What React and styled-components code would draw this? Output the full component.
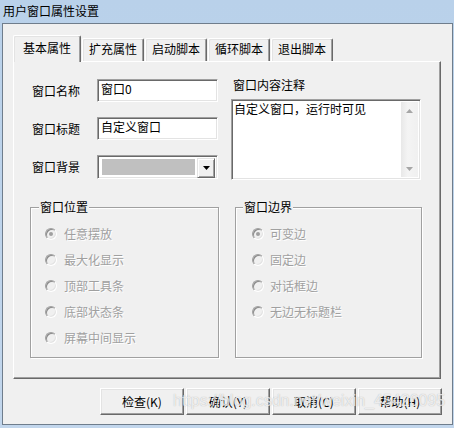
import React from "react";
import styled, { createGlobalStyle } from "styled-components";

const GlobalStyle = createGlobalStyle`
  html, body { margin: 0; padding: 0; background: #b9d1ea; }
  body {
    font-family: "Noto Sans CJK SC", "Liberation Sans", sans-serif;
    font-size: 12px;
    color: #000;
  }
  * { box-sizing: border-box; }
`;

const Window = styled.div`
  position: relative;
  width: 454px;
  height: 428px;
  display: flex;
  flex-direction: column;
  background: linear-gradient(#b9d1ea, #c2d6ec);
  overflow: hidden;
`;

const TitleBar = styled.div`
  height: 22px;
  padding-left: 3px;
  display: flex;
  align-items: center;
  font-size: 12px;
  line-height: 14px;
  color: #000;
`;

const Body = styled.div`
  flex: 1;
  margin: 1px 1px 3px 2px;
  border: 1px solid #6f7d8c;
  background: #f0f0f0;
  padding: 11px 10px 0 10px;
  display: flex;
  flex-direction: column;
`;

const TabRow = styled.div`
  display: flex;
  align-items: flex-end;
  gap: 1px;
  height: 26px;
`;

const Tab = styled.div`
  position: relative;
  z-index: ${(p) => (p.$active ? 1 : 0)};
  width: ${(p) => (p.$active ? 68 : 62)}px;
  height: ${(p) => (p.$active ? 27 : 23)}px;
  margin-bottom: ${(p) => (p.$active ? -1 : 0)}px;
  padding-top: ${(p) => (p.$active ? 5 : 3)}px;
  display: flex;
  justify-content: center;
  align-items: flex-start;
  background: #f0f0f0;
  border-top: 1px solid #ffffff;
  border-left: 1px solid #ffffff;
  border-right: 1px solid #696969;
  box-shadow: inset -1px 0 0 #a0a0a0, inset 1px 1px 0 #e3e3e3;
  border-radius: 2px 2px 0 0;
  line-height: 14px;
  white-space: nowrap;
`;

const Panel = styled.div`
  width: 428px;
  height: 318px;
  border-top: 1px solid #ffffff;
  border-left: 1px solid #ffffff;
  border-right: 1px solid #696969;
  border-bottom: 1px solid #696969;
  box-shadow: inset -1px -1px 0 #a0a0a0;
  padding: 16px 0 0 16px;
  display: flex;
  flex-direction: column;
`;

const TopArea = styled.div`
  display: flex;
  gap: 13px;
  padding-left: 2px;
`;

const FieldList = styled.div`
  display: flex;
  flex-direction: column;
  gap: 15px;
  padding-top: 1px;
  width: 186px;
`;

const Field = styled.div`
  display: flex;
  align-items: center;
  height: ${(p) => p.$h || 23}px;
`;

const Label = styled.span`
  width: 65px;
  line-height: 14px;
  white-space: nowrap;
`;

const sunken = `
  border: 1px solid;
  border-color: #a0a0a0 #ffffff #ffffff #a0a0a0;
  box-shadow: inset 1px 1px 0 #696969, inset -1px -1px 0 #e3e3e3;
`;

const TextBox = styled.div`
  width: 121px;
  height: 23px;
  ${sunken}
  background: #fff;
  padding: 2px 2px 0 3px;
  line-height: 14px;
  white-space: nowrap;
`;

const Combo = styled.div`
  width: 121px;
  height: 24px;
  ${sunken}
  background: #fff;
  padding: 2px;
  display: flex;
`;

const Swatch = styled.div`
  flex: 1;
  margin: 1px 2px 1px 2px;
  background: #c0c0c0;
`;

const DropButton = styled.div`
  width: 18px;
  height: 20px;
  display: flex;
  align-items: center;
  justify-content: center;
  background: #f0f0f0;
  border: 1px solid;
  border-color: #e3e3e3 #696969 #696969 #e3e3e3;
  box-shadow: inset 1px 1px 0 #ffffff, inset -1px -1px 0 #a0a0a0;
`;

const NoteColumn = styled.div`
  display: flex;
  flex-direction: column;
`;

const NoteLabel = styled.div`
  line-height: 14px;
  padding-left: 2px;
  margin-bottom: 7px;
  white-space: nowrap;
`;

const NoteBox = styled.div`
  width: 190px;
  height: 81px;
  ${sunken}
  background: #fff;
  padding: 2px;
  display: flex;
`;

const NoteText = styled.div`
  flex: 1;
  line-height: 14px;
  white-space: nowrap;
`;

const ScrollBar = styled.div`
  width: 17px;
  display: flex;
  flex-direction: column;
  justify-content: space-between;
  background: linear-gradient(90deg, #e8e8e8, #f4f4f4 40%, #f0f0f0);
`;

const ScrollArrow = styled.div`
  height: 17px;
  display: flex;
  align-items: center;
  justify-content: center;
`;

const GroupRow = styled.div`
  display: flex;
  gap: 16px;
  margin-top: 20px;
`;

const Group = styled.fieldset`
  margin: 0;
  padding: 0;
  width: ${(p) => p.$w}px;
  height: 158px;
  border: 1px solid #a0a0a0;
  box-shadow: inset 1px 1px 0 #ffffff, 1px 1px 0 #ffffff;
  min-width: 0;
`;

const Legend = styled.legend`
  margin-left: ${(p) => p.$offset}px;
  padding: 0 1px;
  line-height: 14px;
  font-size: 12px;
  color: #000;
  background: #f0f0f0;
`;

const RadioList = styled.div`
  margin-top: 7px;
  padding-left: ${(p) => p.$indent}px;
  display: flex;
  flex-direction: column;
`;

const RadioRow = styled.div`
  height: 26px;
  display: flex;
  align-items: center;
  gap: ${(p) => p.$gap}px;
`;

const RadioCircle = styled.span`
  position: relative;
  width: 12px;
  height: 12px;
  border-radius: 50%;
  border: 1px solid;
  border-color: #a0a0a0 #ffffff #ffffff #a0a0a0;
  box-shadow: inset 1px 1px 0 #8a8a8a, inset -1px -1px 0 #e3e3e3;
  background: #f0f0f0;
  flex: none;

  &::after {
    content: "";
    display: ${(p) => (p.$checked ? "block" : "none")};
    position: absolute;
    left: 3px;
    top: 3px;
    width: 4px;
    height: 4px;
    border-radius: 50%;
    background: #a0a0a0;
  }
`;

const DisabledText = styled.span`
  color: #a0a0a0;
  text-shadow: 1px 1px 0 #ffffff;
  line-height: 14px;
  white-space: nowrap;
`;

const ButtonRow = styled.div`
  display: flex;
  justify-content: flex-end;
  gap: 2px;
  margin-top: 9px;
`;

const Button = styled.div`
  width: 84px;
  height: 27px;
  display: flex;
  align-items: center;
  justify-content: center;
  background: #f0f0f0;
  border: 1px solid;
  border-color: #ffffff #696969 #696969 #ffffff;
  box-shadow: inset -1px -1px 0 #a0a0a0, inset 1px 1px 0 #e3e3e3;
  line-height: 14px;
  white-space: nowrap;
`;

const Watermark = styled.div`
  position: absolute;
  left: 173px;
  top: 392px;
  font-family: "Liberation Sans", Arial, sans-serif;
  font-size: 16px;
  line-height: 18px;
  color: rgba(255, 255, 255, 0.75);
  text-shadow: 0 0 1px rgba(90, 90, 90, 0.45);
  white-space: nowrap;
  pointer-events: none;
`;

const Triangle = ({ dir = "down", color = "#000", w = 7, h = 4 }) => (
  <svg width={w} height={h} viewBox={`0 0 ${w} ${h}`}>
    {dir === "down" ? (
      <polygon points={`0,0 ${w},0 ${w / 2},${h}`} fill={color} />
    ) : (
      <polygon points={`0,${h} ${w},${h} ${w / 2},0`} fill={color} />
    )}
  </svg>
);

const tabs = ["基本属性", "扩充属性", "启动脚本", "循环脚本", "退出脚本"];
const positions = ["任意摆放", "最大化显示", "顶部工具条", "底部状态条", "屏幕中间显示"];
const borders = ["可变边", "固定边", "对话框边", "无边无标题栏"];
const buttons = ["检查(K)", "确认(Y)", "取消(C)", "帮助(H)"];

export default function App() {
  return (
    <>
      <GlobalStyle />
      <Window>
        <TitleBar>用户窗口属性设置</TitleBar>
        <Body>
          <TabRow>
            {tabs.map((t, i) => (
              <Tab key={t} $active={i === 0}>
                {t}
              </Tab>
            ))}
          </TabRow>
          <Panel>
            <TopArea>
              <FieldList>
                <Field>
                  <Label>窗口名称</Label>
                  <TextBox>窗口0</TextBox>
                </Field>
                <Field>
                  <Label>窗口标题</Label>
                  <TextBox>自定义窗口</TextBox>
                </Field>
                <Field $h={24}>
                  <Label>窗口背景</Label>
                  <Combo>
                    <Swatch />
                    <DropButton>
                      <Triangle dir="down" color="#000" w={7} h={4} />
                    </DropButton>
                  </Combo>
                </Field>
              </FieldList>
              <NoteColumn>
                <NoteLabel>窗口内容注释</NoteLabel>
                <NoteBox>
                  <NoteText>自定义窗口，运行时可见</NoteText>
                  <ScrollBar>
                    <ScrollArrow>
                      <Triangle dir="up" color="#a6a6a6" w={7} h={4} />
                    </ScrollArrow>
                    <ScrollArrow>
                      <Triangle dir="down" color="#a6a6a6" w={7} h={4} />
                    </ScrollArrow>
                  </ScrollBar>
                </NoteBox>
              </NoteColumn>
            </TopArea>
            <GroupRow>
              <Group $w={189}>
                <Legend $offset={8}>窗口位置</Legend>
                <RadioList $indent={14}>
                  {positions.map((p, i) => (
                    <RadioRow key={p} $gap={7}>
                      <RadioCircle $checked={i === 0} />
                      <DisabledText>{p}</DisabledText>
                    </RadioRow>
                  ))}
                </RadioList>
              </Group>
              <Group $w={187}>
                <Legend $offset={7}>窗口边界</Legend>
                <RadioList $indent={16}>
                  {borders.map((p, i) => (
                    <RadioRow key={p} $gap={6}>
                      <RadioCircle $checked={i === 0} />
                      <DisabledText>{p}</DisabledText>
                    </RadioRow>
                  ))}
                </RadioList>
              </Group>
            </GroupRow>
          </Panel>
          <ButtonRow>
            {buttons.map((b) => (
              <Button key={b}>{b}</Button>
            ))}
          </ButtonRow>
        </Body>
        <Watermark>https://blog.csdn.net/weixin_45426095</Watermark>
      </Window>
    </>
  );
}
